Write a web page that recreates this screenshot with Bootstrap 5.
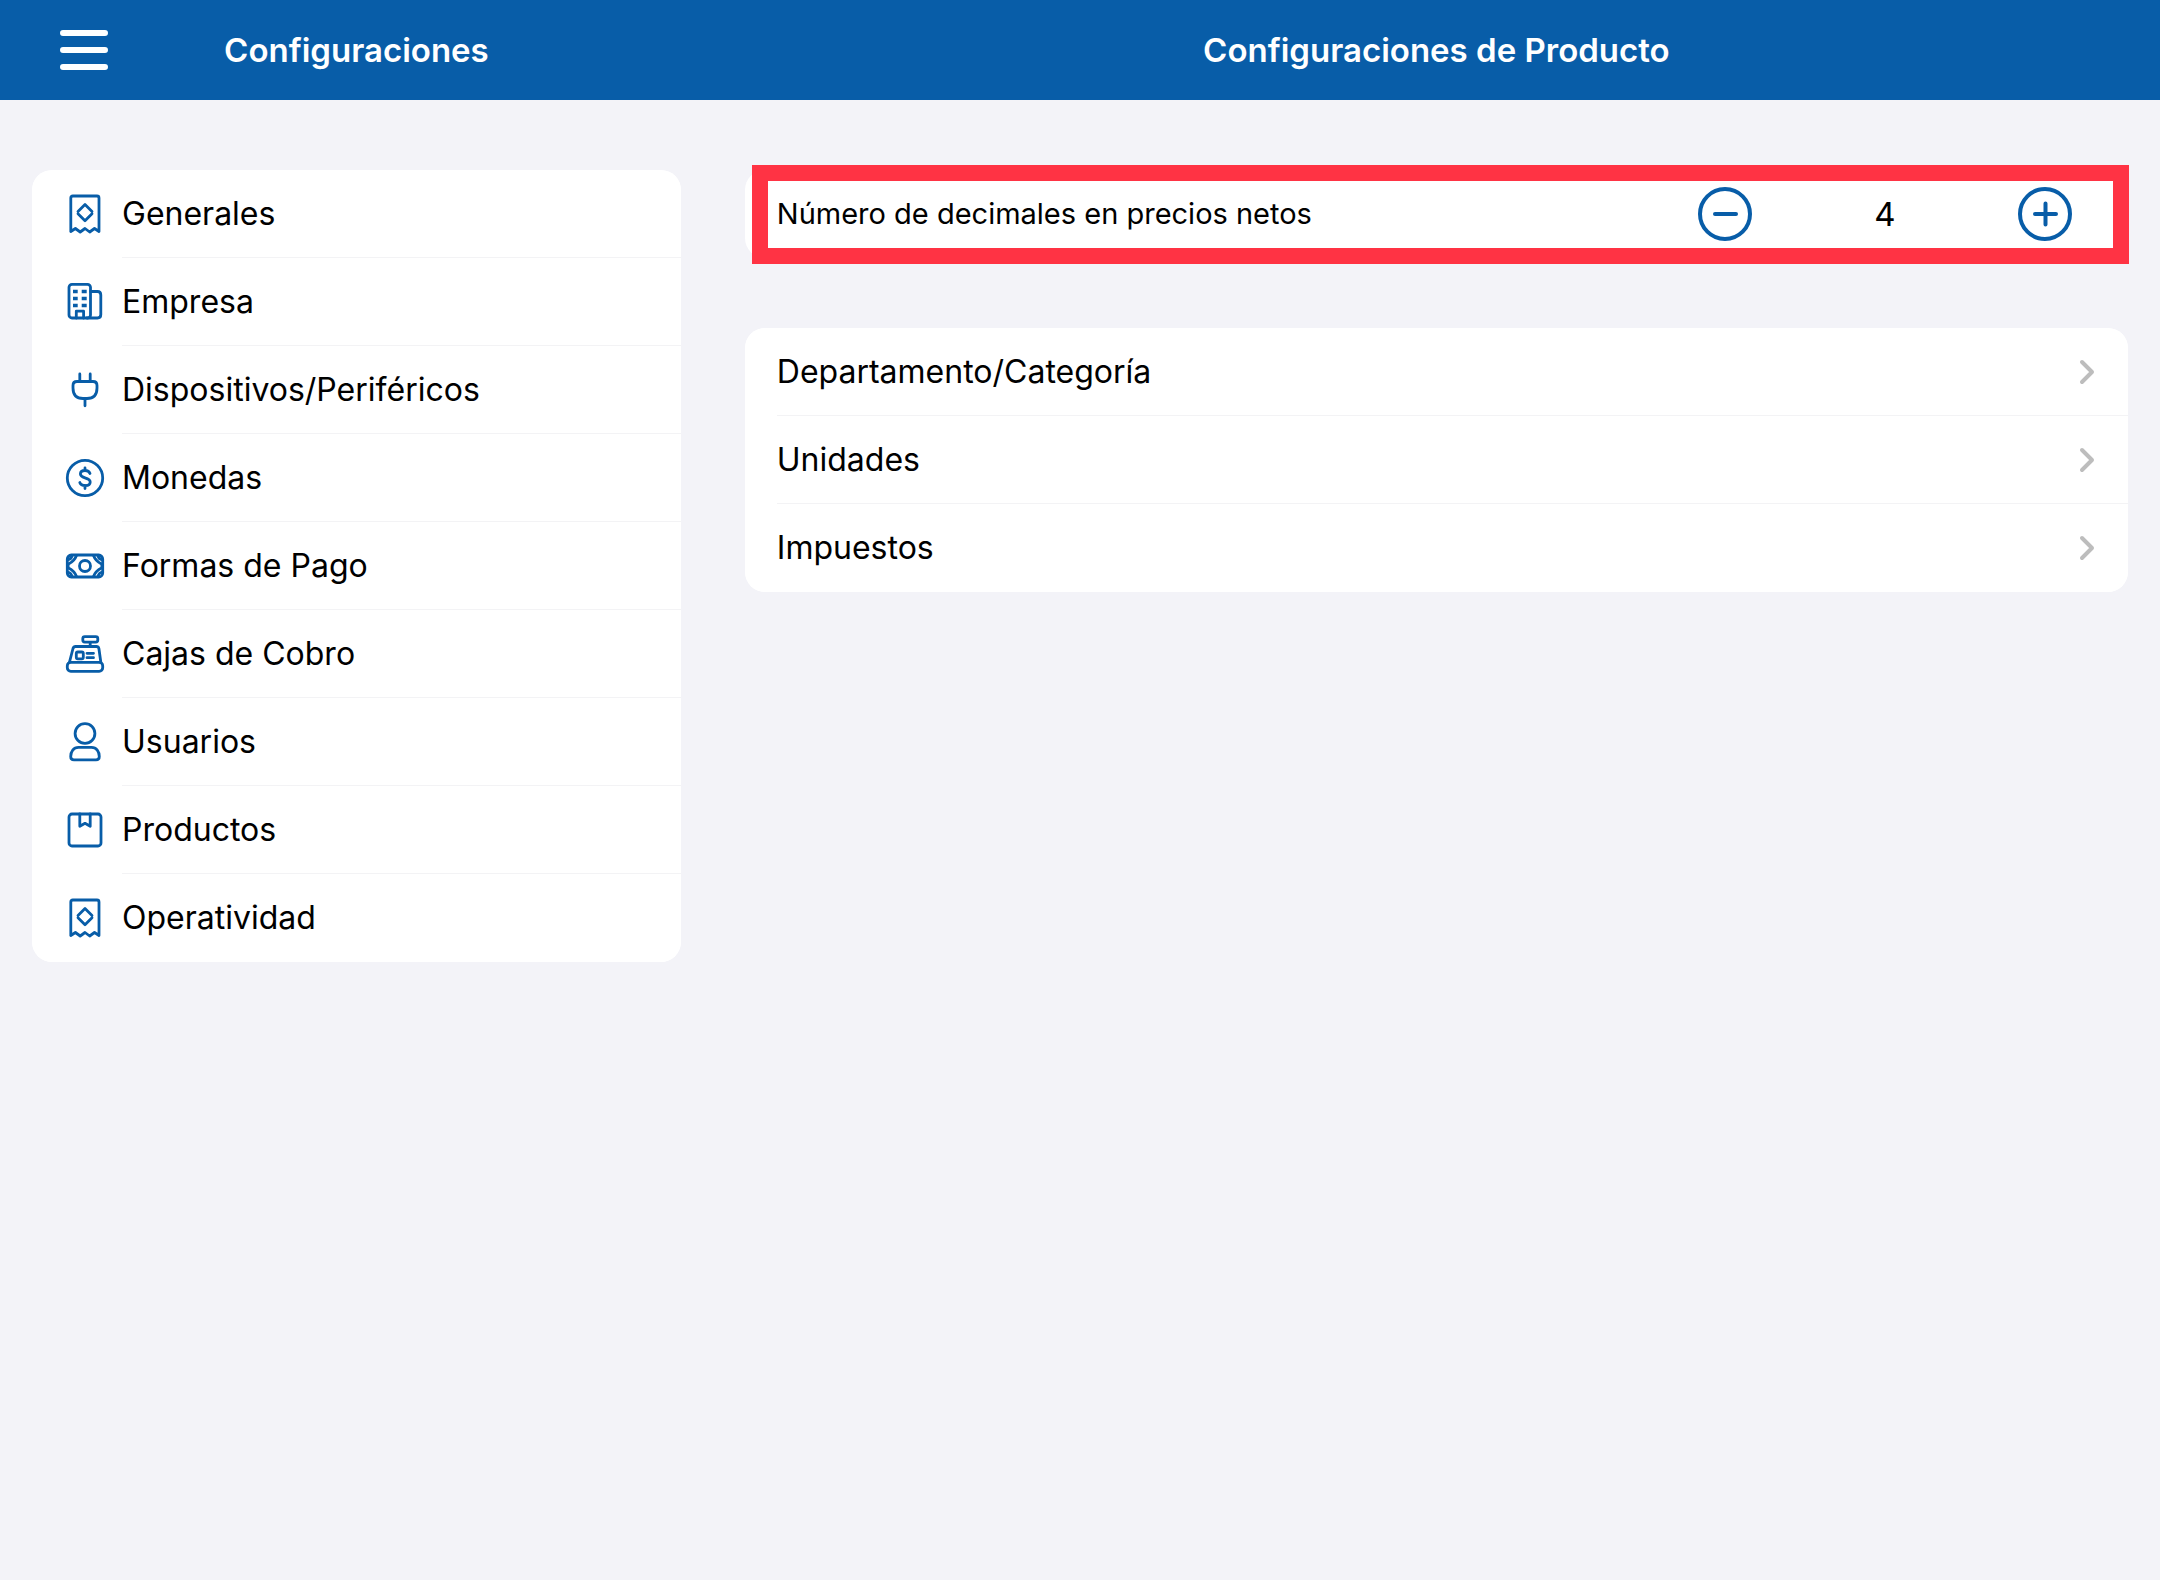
<!DOCTYPE html>
<html lang="es">
<head>
<meta charset="utf-8">
<meta name="viewport" content="width=device-width, initial-scale=1">
<title>Configuraciones de Producto</title>
<link href="https://cdn.jsdelivr.net/npm/bootstrap@5.3.0/dist/css/bootstrap.min.css" rel="stylesheet">
<style>
  :root { --brand: #085da8; --page: #f3f3f8; --line: #f3f3f5; --alert: #ff3344; }
  body { font-family: Inter, "Liberation Sans", sans-serif; font-size: 32px; line-height: 44px; color: #000; background: var(--page); }
  .topbar { height: 100px; background: var(--brand); color: #fff; }
  .topbar h1 { font-size: 33px; line-height: 44px; font-weight: 600; }
  .pane-side { flex: 0 0 33%; width: 33%; }
  .pane-main { flex: 1 1 0; min-width: 0; }
  .menu-slot { flex: 0 0 108px; }
  .menu-btn { width: 48px; height: 40px; color: #fff; }
  .content { padding: 70px 32px 32px; }
  .panel { --bs-list-group-border-radius: 20px; --bs-list-group-border-width: 0; --bs-list-group-color: #000; --bs-list-group-action-color: #000; overflow: hidden; background: #fff; border-radius: 20px; }
  .entry { display: flex; align-items: center; gap: 16px; padding: 0 0 0 32px; }
  .entry-text { flex: 1 1 0; display: flex; align-items: center; justify-content: space-between; height: 88px; padding-top: 1px; padding-right: 33px; border-bottom: 1px solid var(--line); }
  .entry:last-child .entry-text { border-bottom-color: transparent; }
  .side-icon { flex: none; width: 42px; height: 42px; fill: none; stroke: var(--brand); stroke-width: 2.8; stroke-linecap: round; stroke-linejoin: round; }
  .chevron { flex: none; width: 16px; height: 26px; fill: none; stroke: #bdbdbd; stroke-width: 4; stroke-linecap: round; stroke-linejoin: round; }
  .setting { height: 88px; padding: 0 56px 0 32px; margin-bottom: 70px; background: #fff; border-radius: 20px; }
  .setting-label { font-size: 29px; }
  .stepper { width: 374px; }
  .stepper input { flex: 1 1 0; min-width: 0; border: 0; padding: 0; background: transparent; color: #000; text-align: center; font-size: 33px; line-height: 44px; }
  .step-btn { width: 54px; height: 54px; color: var(--brand); }
  .step-btn svg { fill: none; stroke: currentColor; stroke-width: 4; stroke-linecap: round; }
  .highlight { position: absolute; inset: -5px -1px -6px 7px; border: 16px solid var(--alert); pointer-events: none; }
</style>
</head>
<body>
<svg class="d-none" aria-hidden="true">
  <symbol id="receipt" viewBox="0 0 42 42">
    <path d="M6.800 38.500V5Q6.800 3 8.800 3H33Q35 3 35 5V38.500L30.500 35.500L25.700 39L21 35.500L16.200 39L11.400 35.500Z"/>
    <path d="M14 18.500L21 11.500L28 18.500M14 20.800L21 27.800L28 20.800"/>
  </symbol>
</svg>

<header class="topbar d-flex align-items-center">
  <div class="pane-side d-flex align-items-center">
    <div class="menu-slot d-flex justify-content-end">
      <button type="button" class="menu-btn btn border-0 p-0 d-flex" aria-label="Menú">
        <svg width="48" height="40" viewBox="0 0 48 40" stroke="currentColor" stroke-width="6" stroke-linecap="round"><path d="M3 3H45M3 20H45M3 37H45"/></svg>
      </button>
    </div>
    <h1 class="flex-fill text-center m-0">Configuraciones</h1>
    <div class="menu-slot"></div>
  </div>
  <h1 class="pane-main text-center m-0">Configuraciones de Producto</h1>
</header>

<div class="d-flex align-items-start">
  <nav class="pane-side content" aria-label="Configuraciones">
    <div class="panel list-group">
      <a href="#" class="entry list-group-item list-group-item-action">
        <svg class="side-icon"><use href="#receipt"/></svg><span class="entry-text">Generales</span></a>
      <a href="#" class="entry list-group-item list-group-item-action">
        <svg class="side-icon" viewBox="0 0 42 42"><rect x="5" y="3.300" width="21.500" height="33.700" rx="3"/><path d="M26.500 10.500H33.500Q36.800 10.500 36.800 14V33.500Q36.800 37 33.500 37H23M12.300 37V30.200H19.600V37"/><path stroke-width="3.600" stroke-linecap="butt" d="M9 10.500H13.700M17.700 10.500H22.700M9 17.500H13.700M17.700 17.500H22.700M9 24.500H13.700M17.700 24.500H22.700"/></svg><span class="entry-text">Empresa</span></a>
      <a href="#" class="entry list-group-item list-group-item-action">
        <svg class="side-icon" viewBox="0 0 42 42"><path d="M15.800 5V12M26.200 5V12M21 30V36.800M13 12.500H29Q33 12.500 33 16.500V19Q33 29.500 23 29.500H19Q9 29.500 9 19V16.500Q9 12.500 13 12.500Z"/></svg><span class="entry-text">Dispositivos/Periféricos</span></a>
      <a href="#" class="entry list-group-item list-group-item-action">
        <svg class="side-icon" viewBox="0 0 42 42"><circle cx="21" cy="21" r="17.700"/><path d="M21 11V13.500M21 28.500V31.500M26 16.500C25.200 14.300 23.200 13.500 21 13.500C18.200 13.500 16.400 15 16.400 17C16.400 19.200 18.500 20 21 20.800C24 21.700 26.200 22.500 26.200 25C26.200 27.400 24 28.600 21.300 28.600C18.500 28.600 16.500 27.600 15.800 25.500"/></svg><span class="entry-text">Monedas</span></a>
      <a href="#" class="entry list-group-item list-group-item-action">
        <svg class="side-icon" viewBox="0 0 42 42"><rect x="3.300" y="10" width="35.400" height="22" rx="4"/><circle cx="21" cy="21" r="5.500"/><path d="M12.500 10.500Q10.500 16 4.500 19Q3.500 21 4.500 23Q10.500 26 12.500 31.500M29.500 10.500Q31.500 16 37.500 19Q38.500 21 37.500 23Q31.500 26 29.500 31.500M8 10.500Q7.500 14 3.500 15M34 10.500Q34.500 14 38.500 15M8 31.500Q7.500 28 3.500 27M34 31.500Q34.500 28 38.500 27"/></svg><span class="entry-text">Formas de Pago</span></a>
      <a href="#" class="entry list-group-item list-group-item-action">
        <svg class="side-icon" viewBox="0 0 42 42"><rect x="18.800" y="3.700" width="15" height="5.400" rx="2"/><rect x="3.300" y="29.300" width="35.400" height="9" rx="3.500"/><rect x="12.300" y="19" width="7" height="6.800" rx="1.500"/><path d="M26.200 9.500V13M5.500 29L9 15.500Q9.600 13.500 11.600 13.500H32.400Q34.400 13.500 34.900 15.500L36.800 29M23 20.300H29.500M23 24.700H29.500"/></svg><span class="entry-text">Cajas de Cobro</span></a>
      <a href="#" class="entry list-group-item list-group-item-action">
        <svg class="side-icon" viewBox="0 0 42 42"><circle cx="21" cy="12.500" r="9.900"/><path d="M14.500 26.300H27.500C32.500 26.300 35.300 30.500 35.300 35.500Q35.300 38.900 32 38.900H10Q6.700 38.900 6.700 35.500C6.700 30.500 9.500 26.300 14.500 26.300Z"/></svg><span class="entry-text">Usuarios</span></a>
      <a href="#" class="entry list-group-item list-group-item-action">
        <svg class="side-icon" viewBox="0 0 42 42"><rect x="5" y="5" width="32" height="32" rx="3"/><path d="M15.800 5V17.300L21 14.300L26.200 17.300V5"/></svg><span class="entry-text">Productos</span></a>
      <a href="#" class="entry list-group-item list-group-item-action">
        <svg class="side-icon"><use href="#receipt"/></svg><span class="entry-text">Operatividad</span></a>
    </div>
  </nav>

  <main class="pane-main content">
    <div class="setting position-relative d-flex align-items-center justify-content-between">
      <label class="setting-label" for="decimals">Número de decimales en precios netos</label>
      <div class="stepper d-flex align-items-center">
        <button type="button" class="step-btn btn border-0 p-0 d-flex" aria-label="Disminuir">
          <svg width="54" height="54" viewBox="0 0 54 54"><circle cx="27" cy="27" r="25"/><path d="M17 27H38"/></svg>
        </button>
        <input id="decimals" type="text" inputmode="numeric" value="4">
        <button type="button" class="step-btn btn border-0 p-0 d-flex" aria-label="Aumentar">
          <svg width="54" height="54" viewBox="0 0 54 54"><circle cx="27" cy="27" r="25"/><path d="M17 27H38M27.500 16.500V37.500"/></svg>
        </button>
      </div>
      <div class="highlight"></div>
    </div>

    <div class="panel list-group">
      <a href="#" class="entry list-group-item list-group-item-action"><span class="entry-text">Departamento/Categoría
        <svg class="chevron" viewBox="0 0 16 26"><path d="M3 3L13 13L3 23"/></svg></span></a>
      <a href="#" class="entry list-group-item list-group-item-action"><span class="entry-text">Unidades
        <svg class="chevron" viewBox="0 0 16 26"><path d="M3 3L13 13L3 23"/></svg></span></a>
      <a href="#" class="entry list-group-item list-group-item-action"><span class="entry-text">Impuestos
        <svg class="chevron" viewBox="0 0 16 26"><path d="M3 3L13 13L3 23"/></svg></span></a>
    </div>
  </main>
</div>
<script src="https://cdn.jsdelivr.net/npm/bootstrap@5.3.0/dist/js/bootstrap.bundle.min.js"></script>
</body>
</html>
